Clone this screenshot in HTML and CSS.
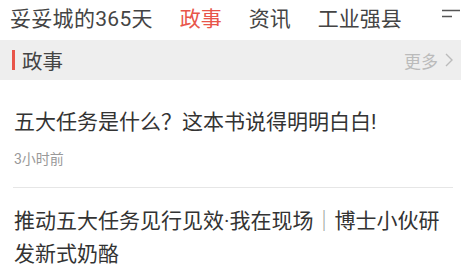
FILE: index.html
```html
<!DOCTYPE html>
<html lang="zh-CN">
<head>
    <meta charset="UTF-8">
    <meta name="viewport" content="width=device-width, initial-scale=1.0">
    <title>妥妥城的365天</title>
    <link rel="stylesheet" href="styles.css">
</head>
<body>
    <nav class="top-nav">
        <a class="nav-item home">妥妥城的365天</a>
        <a class="nav-item active">政事</a>
        <a class="nav-item">资讯</a>
        <a class="nav-item">工业强县</a>
        <span class="nav-menu">
            <svg width="18" height="10" viewBox="0 0 18 10">
                <path d="M0 1.5H18M0 7.5H10" stroke="#555" stroke-width="1.6" fill="none"/>
            </svg>
        </span>
    </nav>

    <div class="section-head">
        <span class="section-bar"></span>
        <span class="section-title">政事</span>
        <a class="section-more">更多
            <svg width="10" height="16" viewBox="0 0 10 16">
                <path d="M2 2L8 8L2 14" stroke="#bbb" stroke-width="1.4" fill="none"/>
            </svg>
        </a>
    </div>

    <div class="news-list">
        <div class="news-item first">
            <div class="news-title">五大任务是什么？这本书说得明明白白!</div>
            <div class="news-time">3小时前</div>
        </div>
        <div class="news-item">
            <div class="news-title">推动五大任务见行见效·我在现场<span class="cjk">｜</span>博士小伙研发新式奶酪</div>
        </div>
    </div>
</body>
</html>
```

FILE: styles.css
```css
body {
    font-family: Roboto, "Noto Sans CJK SC", sans-serif;
    margin: 0;
    padding: 0;
    background-color: #fff;
    color: #333;
}
.cjk {
    font-family: "Noto Sans CJK SC", sans-serif;
    color: #999;
}
.top-nav {
    display: flex;
    align-items: center;
    height: 40px;
    padding-left: 10px;
    padding-bottom: 6px;
    box-sizing: border-box;
    white-space: nowrap;
}
.nav-item {
    font-size: 21px;
    color: #444;
    margin-right: 27px;
}
.nav-item.home {
    letter-spacing: 0.3px;
}
.nav-item.active {
    color: #e8554a;
}
.nav-menu {
    margin-left: auto;
    display: flex;
    padding-right: 1px;
    padding-bottom: 6px;
}
.section-head {
    display: flex;
    align-items: center;
    height: 40px;
    background-color: #eeeeee;
    padding: 0 7px 0 12px;
}
.section-bar {
    width: 3px;
    height: 20px;
    background-color: #e8554a;
    margin-right: 7px;
}
.section-title {
    font-size: 20.5px;
    color: #444;
}
.section-more {
    margin-left: auto;
    display: flex;
    align-items: center;
    gap: 6px;
    font-size: 17px;
    color: #bbb;
}
.news-list {
    margin: 0 8px 0 13px;
}
.news-item {
    padding: 15px 0 18px 1px;
    border-bottom: 1px solid #e6e6e6;
}
.news-item.first {
    padding-top: 26px;
}
.news-item:last-child {
    border-bottom: none;
}
.news-title {
    font-size: 21px;
    line-height: 33px;
    color: #333;
}
.news-time {
    font-size: 14px;
    line-height: 20px;
    color: #999;
    margin-top: 10px;
}
```
